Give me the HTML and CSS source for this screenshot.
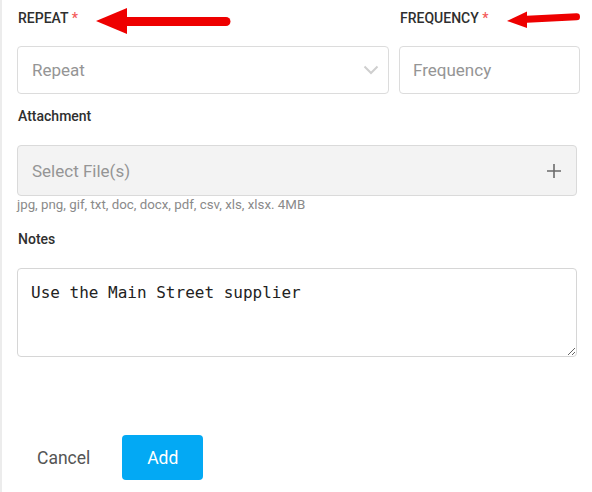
FILE: index.html
```
<!DOCTYPE html>
<html lang="en">
<head>
<meta charset="utf-8">
<title>Add task</title>
<link rel="stylesheet" href="styles.css">
</head>
<body>
<div class="panel">
  <form class="form">
    <div class="row-split">
      <div class="field">
        <label class="label">REPEAT <span class="req">*</span></label>
        <div class="select">
          <span class="placeholder">Repeat</span>
          <svg class="chevron" width="16" height="10" viewBox="0 0 16 10"><path d="M1.5 1.5 L8 8 L14.5 1.5" fill="none" stroke="#cfcfcf" stroke-width="2"/></svg>
        </div>
      </div>
      <div class="field">
        <label class="label">FREQUENCY <span class="req">*</span></label>
        <input class="input" type="text" placeholder="Frequency">
      </div>
    </div>

    <div class="field">
      <label class="label">Attachment</label>
      <div class="file">
        <span class="placeholder">Select File(s)</span>
        <svg class="plus" width="16" height="16" viewBox="0 0 16 16"><path d="M8 1 V15 M1 8 H15" stroke="#6b6b6b" stroke-width="1.6"/></svg>
      </div>
      <p class="hint">jpg, png, gif, txt, doc, docx, pdf, csv, xls, xlsx. 4MB</p>
    </div>

    <div class="field notes">
      <label class="label">Notes</label>
      <textarea class="textarea">Use the Main Street supplier</textarea>
    </div>

    <div class="actions">
      <button type="button" class="btn btn-cancel">Cancel</button>
      <button type="button" class="btn btn-add">Add</button>
    </div>
  </form>

  <svg class="callout" width="592" height="40" viewBox="0 0 592 40">
    <path d="M96 21 L127 8 L127 34 Z" fill="#ee0000"/>
    <line x1="122" y1="21.5" x2="226" y2="21.5" stroke="#ee0000" stroke-width="9" stroke-linecap="round"/>
    <path d="M507 21 L527 11.5 L527 28 Z" fill="#ee0000"/>
    <line x1="522" y1="19.5" x2="576.5" y2="16.8" stroke="#ee0000" stroke-width="7" stroke-linecap="round"/>
  </svg>
</div>
</body>
</html>
```

FILE: styles.css
```
* { box-sizing: border-box; }

html, body {
  margin: 0;
  padding: 0;
  background: #fff;
}

body {
  font-family: Roboto, "Liberation Sans", Arial, sans-serif;
  color: #333;
}

.panel {
  position: relative;
  width: 592px;
  height: 492px;
  border-left: 2px solid #ececec;
}

.form {
  padding: 10px 15px 0 15px;
}

.row-split {
  display: grid;
  grid-template-columns: 372px 181px;
  column-gap: 10px;
  width: 563px;
}

.field {
  display: flex;
  flex-direction: column;
}

.label {
  display: block;
  font-size: 14px;
  line-height: 16px;
  font-weight: 500;
  color: #2f2f2f;
  margin-bottom: 20px;
  padding-left: 1px;
}

.req {
  color: #f45a5a;
}

.select,
.input {
  height: 48px;
  border: 1px solid #dcdcdc;
  border-radius: 4px;
  background: #fff;
}

.select {
  display: flex;
  align-items: center;
  justify-content: space-between;
  padding: 0 9px 0 14px;
}

.placeholder {
  font-size: 17px;
  color: #959595;
}

.input {
  width: 100%;
  padding: 0 13px;
  font-family: inherit;
  font-size: 17px;
  color: #333;
  outline: none;
}

.input::placeholder { color: #959595; }

.row-split + .field { margin-top: 14px; }

.row-split + .field .label { margin-bottom: 21px; }

.file {
  display: flex;
  align-items: center;
  justify-content: space-between;
  height: 51px;
  border: 1px solid #dadada;
  border-radius: 4px;
  background: #f3f3f3;
  padding: 0 14px 0 14px;
}

.hint {
  margin: 1px 0 0;
  font-size: 13.3px;
  line-height: 16px;
  color: #8a8a8a;
}

.notes { margin-top: 18px; }

.notes .label { margin-bottom: 21px; }

.textarea {
  display: block;
  height: 89px;
  width: 100%;
  border: 1px solid #d6d6d6;
  border-radius: 4px;
  padding: 14px 13px;
  font-family: "DejaVu Sans Mono", monospace;
  font-size: 16px;
  color: #222;
  resize: vertical;
  outline: none;
}

.actions {
  display: flex;
  align-items: center;
  gap: 12px;
  margin-top: 78px;
}

.btn {
  height: 45px;
  border: 0;
  border-radius: 4px;
  font-family: inherit;
  font-size: 17.5px;
  cursor: pointer;
}

.btn-cancel {
  background: transparent;
  color: #555;
  padding: 0 20px;
}

.btn-add {
  background: #03a9f4;
  color: #fff;
  width: 81px;
  padding: 0;
}

.callout {
  position: absolute;
  left: -2px;
  top: 0;
  pointer-events: none;
}
```
